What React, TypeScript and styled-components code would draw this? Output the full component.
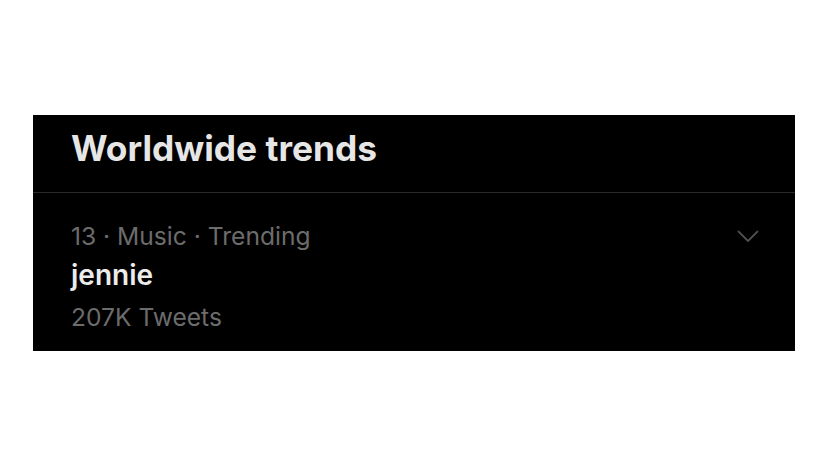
import React from "react";
import styled, { createGlobalStyle } from "styled-components";

const GlobalStyle = createGlobalStyle`
  html, body {
    margin: 0;
    padding: 0;
    background: #ffffff;
  }
  body {
    font-family: Inter, "Liberation Sans", Arial, sans-serif;
  }
`;

const Page = styled.div`
  width: 828px;
  height: 466px;
  display: flex;
  align-items: center;
  justify-content: center;
  background: #ffffff;
`;

const Panel = styled.section`
  width: 762px;
  height: 236px;
  background: #000000;
  display: flex;
  flex-direction: column;
`;

const Header = styled.header`
  height: 78px;
  box-sizing: border-box;
  padding: 12px 38px 0;
  border-bottom: 1px solid #2b2b2b;
`;

const Title = styled.h2`
  margin: 0;
  font-family: Inter, "Liberation Sans", Arial, sans-serif;
  font-weight: 700;
  font-size: 35.3px;
  line-height: 44px;
  color: #e6e6e6;
  letter-spacing: 0;
`;

const TrendRow = styled.div`
  display: flex;
  justify-content: space-between;
  align-items: flex-start;
  padding: 28px 36px 0 38px;
`;

const TrendBody = styled.div`
  display: flex;
  flex-direction: column;
`;

const Meta = styled.div<{ $gap?: number }>`
  font-family: Inter, "Liberation Sans", Arial, sans-serif;
  font-size: 24.6px;
  line-height: 30px;
  color: #6c6c6c;
  margin-top: ${(p) => p.$gap ?? 0}px;
`;

const TrendName = styled.div`
  font-family: Inter, "Liberation Sans", Arial, sans-serif;
  font-weight: 600;
  font-size: 28px;
  line-height: 36px;
  color: #ececec;
  margin-top: 6px;
`;

const Caret = styled.button`
  background: none;
  border: 0;
  padding: 0;
  margin-top: 9px;
  width: 22px;
  height: 13px;
  display: flex;
  cursor: pointer;
`;

export default function App() {
  return (
    <>
      <GlobalStyle />
      <Page>
        <Panel>
          <Header>
            <Title>Worldwide trends</Title>
          </Header>
          <TrendRow>
            <TrendBody>
              <Meta>13 · Music · Trending</Meta>
              <TrendName>jennie</TrendName>
              <Meta $gap={9}>207K Tweets</Meta>
            </TrendBody>
            <Caret aria-label="More">
              <svg width="22" height="13" viewBox="0 0 22 13" fill="none">
                <polyline
                  points="1.5,1.5 11,11 20.5,1.5"
                  stroke="#4f4f4f"
                  strokeWidth="1.8"
                  strokeLinecap="round"
                  strokeLinejoin="round"
                />
              </svg>
            </Caret>
          </TrendRow>
        </Panel>
      </Page>
    </>
  );
}
